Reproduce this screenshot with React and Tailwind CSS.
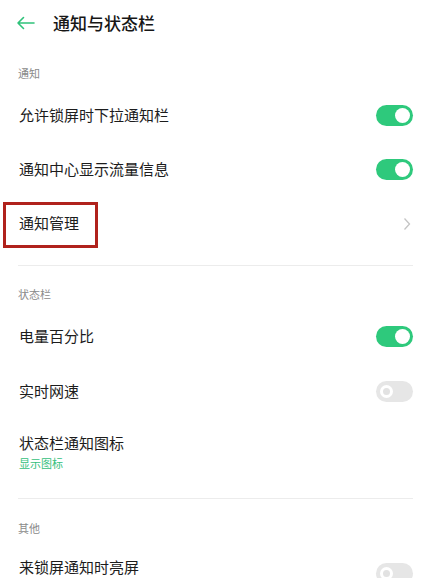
import React from "react";

const font = { fontFamily: '"Noto Sans CJK SC", "Noto Sans", sans-serif' };

function Toggle({ on }) {
  if (on) {
    return (
      <div className="w-[37px] h-[21px] rounded-full bg-[#2ec97c] flex items-center justify-end pr-[3px]">
        <div className="w-[15px] h-[15px] rounded-full bg-white" />
      </div>
    );
  }
  return (
    <div className="w-[37px] h-[21px] rounded-full bg-[#e6e6e6] flex items-center pl-[4px]">
      <div className="w-[13px] h-[13px] rounded-full border-[3px] border-white bg-[#e2e2e2]" />
    </div>
  );
}

function Chevron() {
  return (
    <svg width="8" height="14" viewBox="0 0 8 14" className="mr-[2px]">
      <polyline points="1.5,1.5 6.5,7 1.5,12.5" fill="none" stroke="#c4c4c4" strokeWidth="1.3" />
    </svg>
  );
}

function SectionLabel({ children }) {
  return (
    <div className="h-[30px] flex items-center pl-[18px] text-[11px] text-[#8a8a8a]">
      {children}
    </div>
  );
}

function Row({ title, right, h = "h-[54px]", children }) {
  return (
    <div className={`relative ${h} flex items-center justify-between pl-[19px] pr-[9px]`}>
      <span className="text-[15px] text-[#1c1c1c]">{title}</span>
      {right}
      {children}
    </div>
  );
}

function Divider() {
  return <div className="ml-[18px] mr-[9px] h-px bg-[#ececec]" />;
}

export default function App() {
  return (
    <div className="w-[422px] h-[578px] bg-white overflow-hidden" style={font}>
      {/* header */}
      <div className="h-[46px] flex items-center pl-[16px]">
        <svg width="19" height="14" viewBox="0 0 19 14">
          <path d="M18 7 H2 M7.5 1.5 L2 7 L7.5 12.5" fill="none" stroke="#2fc27a" strokeWidth="1.6" strokeLinecap="round" strokeLinejoin="round" />
        </svg>
        <span className="ml-[18px] text-[17px] font-medium text-[#161616]">通知与状态栏</span>
      </div>

      <div className="mt-[12px]">
        <SectionLabel>通知</SectionLabel>
        <Row title="允许锁屏时下拉通知栏" right={<Toggle on />} />
        <Row title="通知中心显示流量信息" right={<Toggle on />} />
        <Row title="通知管理" h="h-[55px]" right={<Chevron />}>
          <div className="absolute left-[3px] top-[6px] w-[95px] h-[46px] border-[3px] border-[#b0221c]" />
        </Row>
      </div>

      <div className="mt-[14px]">
        <Divider />
      </div>

      <div className="mt-[13px]">
        <SectionLabel>状态栏</SectionLabel>
        <Row title="电量百分比" h="h-[55px]" right={<Toggle on />} />
        <Row title="实时网速" h="h-[55px]" right={<Toggle />} />
        <div className="pl-[19px] pt-[13px] pb-[12px] flex flex-col">
          <span className="text-[15px] leading-[22px] text-[#1c1c1c]">状态栏通知图标</span>
          <span className="text-[11px] leading-[18px] text-[#35c07c]">显示图标</span>
        </div>
      </div>

      <div className="mt-[14px]">
        <Divider />
      </div>

      <div className="mt-[14px]">
        <SectionLabel>其他</SectionLabel>
        <div className="flex justify-between pl-[19px] pr-[9px] pt-[13px]">
          <span className="text-[15px] leading-[22px] text-[#1c1c1c]">来锁屏通知时亮屏</span>
          <div className="mt-[7px]">
            <Toggle />
          </div>
        </div>
      </div>
    </div>
  );
}
